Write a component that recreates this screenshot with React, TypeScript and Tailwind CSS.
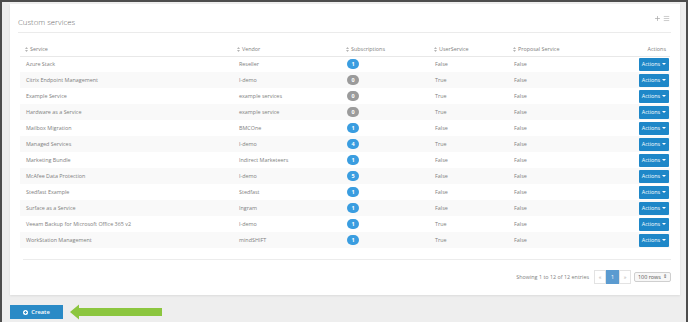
import { Plus, Menu } from 'lucide-react';

type Row = {
  service: string;
  vendor: string;
  subs: number;
  userService: string;
  proposal: string;
};

const rows: Row[] = [
  { service: 'Azure Stack', vendor: 'Reseller', subs: 1, userService: 'False', proposal: 'False' },
  { service: 'Citrix Endpoint Management', vendor: 'I-demo', subs: 0, userService: 'True', proposal: 'False' },
  { service: 'Example Service', vendor: 'example services', subs: 0, userService: 'True', proposal: 'False' },
  { service: 'Hardware as a Service', vendor: 'example service', subs: 0, userService: 'True', proposal: 'False' },
  { service: 'Mailbox Migration', vendor: 'BMCOne', subs: 1, userService: 'False', proposal: 'False' },
  { service: 'Managed Services', vendor: 'I-demo', subs: 4, userService: 'True', proposal: 'False' },
  { service: 'Marketing Bundle', vendor: 'Indirect Marketeers', subs: 1, userService: 'False', proposal: 'False' },
  { service: 'McAfee Data Protection', vendor: 'I-demo', subs: 5, userService: 'False', proposal: 'False' },
  { service: 'Stedfast Example', vendor: 'Stedfast', subs: 1, userService: 'False', proposal: 'False' },
  { service: 'Surface as a Service', vendor: 'Ingram', subs: 1, userService: 'False', proposal: 'False' },
  { service: 'Veeam Backup for Microsoft Office 365 v2', vendor: 'I-demo', subs: 1, userService: 'True', proposal: 'False' },
  { service: 'WorkStation Management', vendor: 'mindSHIFT', subs: 1, userService: 'True', proposal: 'False' },
];

function SortIcon() {
  return (
    <svg width="3" height="5" viewBox="0 0 3 5" className="mr-[2px] inline-block">
      <path d="M1.5 0 L3 2 L0 2 Z M0 3 L3 3 L1.5 5 Z" fill="#b5b5b5" />
    </svg>
  );
}

function Caret() {
  return (
    <svg width="4" height="2" viewBox="0 0 4 2" className="ml-[2px] inline-block">
      <path d="M0 0 L4 0 L2 2 Z" fill="#fff" />
    </svg>
  );
}

export default function App() {
  return (
    <div
      className="h-[322px] w-[688px] overflow-hidden bg-[#4d4d4d] pl-[2px] pr-[2px] pt-[2px]"
      style={{ fontFamily: '"Open Sans", "Liberation Sans", sans-serif' }}
    >
      <div className="h-[320px] bg-[#eeeeee] pl-[8px] pr-[6px] pt-[2px]">
        {/* Panel */}
        <div className="h-[291px] bg-white shadow-[0_1px_2px_rgba(0,0,0,0.08)]">
          {/* Title */}
          <div className="flex h-[28px] items-start justify-between pl-[8px] pr-[10px] pt-[12px]">
            <h2 className="text-[7.8px] font-light leading-[12px] text-[#6a6a6a]">Custom services</h2>
            <div className="-mt-[1px] flex items-center gap-[2px] text-[#a8a8a8]">
              <Plus size={7} strokeWidth={2.5} />
              <Menu size={7} strokeWidth={2} />
            </div>
          </div>
          <div className="ml-[8px] mr-[9px] h-px bg-[#ebebeb]" />

          {/* Table */}
          <div className="ml-[10px] mr-[10px] mt-[10px]">
            <table className="w-[650px] table-fixed border-collapse text-[5.4px] text-[#808080]">
              <colgroup>
                <col className="w-[213px]" />
                <col className="w-[108px]" />
                <col className="w-[88px]" />
                <col className="w-[79px]" />
                <col className="w-[102px]" />
                <col className="w-[60px]" />
              </colgroup>
              <thead>
                <tr className="h-[13px] border-b border-[#e8e8e8]">
                  <th className="pl-[5px] text-left font-normal">
                    <SortIcon />Service
                  </th>
                  <th className="pl-[4px] text-left font-normal">
                    <SortIcon />Vendor
                  </th>
                  <th className="pl-[5px] text-left font-normal">
                    <SortIcon />Subscriptions
                  </th>
                  <th className="pl-[5px] text-left font-normal">
                    <SortIcon />UserService
                  </th>
                  <th className="pl-[5px] text-left font-normal">
                    <SortIcon />Proposal Service
                  </th>
                  <th className="pr-[4px] text-right font-normal">Actions</th>
                </tr>
              </thead>
              <tbody>
                {rows.map((r, i) => (
                  <tr key={r.service} className={`h-[16px] ${i % 2 === 1 ? 'bg-[#f9f9f9]' : 'bg-white'}`}>
                    <td className="pl-[6px]">{r.service}</td>
                    <td className="pl-[6px]">{r.vendor}</td>
                    <td className="pl-[6px]">
                      <span
                        className={`flex h-[10px] w-[12px] items-center justify-center rounded-full text-[5.5px] font-bold text-white ${
                          r.subs > 0 ? 'bg-[#3a9de0]' : 'bg-[#9b9b9b]'
                        }`}
                      >
                        {r.subs}
                      </span>
                    </td>
                    <td className="pl-[6px]">{r.userService}</td>
                    <td className="pl-[6px]">{r.proposal}</td>
                    <td className="pr-[1px] text-right">
                      <button className="inline-flex h-[13px] w-[30px] items-center justify-center rounded-[1px] bg-[#1e87c8] text-[5.4px] text-white">
                        Actions
                        <Caret />
                      </button>
                    </td>
                  </tr>
                ))}
              </tbody>
            </table>
          </div>

          <div className="ml-[13px] mr-[9px] mt-[11px] h-px bg-[#ececec]" />

          {/* Footer */}
          <div className="mt-[10px] flex h-[14px] items-center justify-end pr-[9px] text-[5.4px] text-[#808080]">
            <span className="mr-[5px]">Showing 1 to 12 of 12 entries</span>
            <div className="flex h-[14px]">
              <span className="flex w-[12px] items-center justify-center border border-[#e3e3e3] text-[#aaa]">«</span>
              <span className="flex w-[13px] items-center justify-center bg-[#5b9bd0] text-white">1</span>
              <span className="flex w-[12px] items-center justify-center border border-[#e3e3e3] text-[#aaa]">»</span>
            </div>
            <div className="ml-[3px] flex h-[10px] w-[37px] items-center justify-between rounded-[2px] border border-[#cfcfcf] bg-[#f7f7f7] px-[3px] text-[#555]">
              <span>100 rows</span>
              <span className="text-[5px]">⇕</span>
            </div>
          </div>
        </div>

        {/* Create + arrow */}
        <div className="mt-[9px] flex items-center">
          <button className="flex h-[14px] w-[53px] items-center justify-center gap-[3px] bg-[#2a8ac6] text-[5.8px] font-semibold text-white">
            <svg width="5" height="5" viewBox="0 0 10 10">
              <circle cx="5" cy="5" r="5" fill="#fff" />
              <path d="M5 2.2 V7.8 M2.2 5 H7.8" stroke="#2a8ac6" strokeWidth="1.8" />
            </svg>
            Create
          </button>
          <svg width="92" height="16" viewBox="0 0 92 16" className="ml-[7px]">
            <path d="M0 8 L9 0.5 L9 4 L92 4 L92 12 L9 12 L9 15.5 Z" fill="#8cc63f" />
          </svg>
        </div>
      </div>
    </div>
  );
}
